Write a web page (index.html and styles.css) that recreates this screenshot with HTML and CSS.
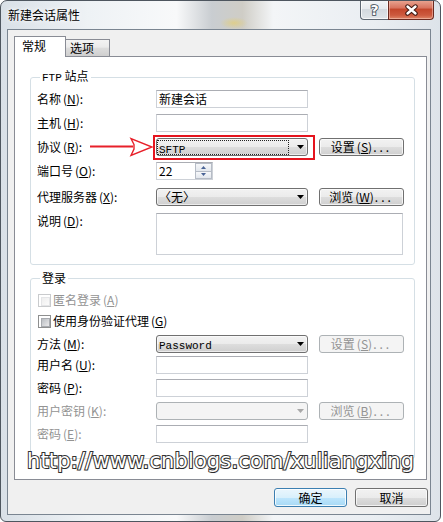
FILE: index.html
```html
<!DOCTYPE html>
<html lang="zh-CN">
<head>
    <meta charset="UTF-8">
    <meta name="viewport" content="width=device-width, initial-scale=1.0">
    <title>新建会话属性</title>

    <link rel="stylesheet" href="styles.css">
</head>
<body>
    <div class="window">
        <div class="titlebar">
            <span class="title">新建会话属性</span>
            <div class="caption">
                <span class="cap help">?</span>
                <span class="cap close">
                    <svg width="15" height="12" viewBox="0 0 15 12">
                        <path d="M3.5 2.5 L11.5 9.5 M11.5 2.5 L3.5 9.5" stroke="#3d1710" stroke-width="4.4" stroke-linecap="round"/>
                        <path d="M3.5 2.5 L11.5 9.5 M11.5 2.5 L3.5 9.5" stroke="#fff" stroke-width="2.4" stroke-linecap="round"/>
                    </svg>
                </span>
            </div>
        </div>

        <div class="client">
            <div class="tabs">
                <span class="tab active">常规</span>
                <span class="tab">选项</span>
            </div>

            <div class="page">
                <fieldset class="group site">
                    <legend><span class="mono">FTP</span> 站点</legend>

                    <div class="row first">
                        <label>名称<span class="k">(<u>N</u>)</span>:</label>
                        <div class="field">新建会话</div>
                    </div>

                    <div class="row">
                        <label>主机<span class="k">(<u>H</u>)</span>:</label>
                        <div class="field"></div>
                    </div>

                    <div class="row">
                        <label>协议<span class="k">(<u>R</u>)</span>:</label>
                        <div class="combo">
                            <span class="val focus"><span class="mono">SFTP</span></span>
                            <svg class="drop" width="7" height="4" viewBox="0 0 7 4"><polygon points="0,0 7,0 3.5,4" fill="#000"/></svg>
                        </div>
                        <button class="btn">设置<span class="k">(<u>S</u>)</span><span class="dots">...</span></button>
                        <svg class="pointer" width="64" height="20" viewBox="0 0 64 20">
                            <line x1="0" y1="9.5" x2="43" y2="9.5" stroke="#e8202a" stroke-width="2"/>
                            <polygon points="44,7.5 41,1.5 62,10 41,18.5 44,12" fill="#fff" stroke="#e8202a" stroke-width="1.4" stroke-linejoin="miter"/>
                        </svg>
                        <span class="redbox"></span>
                    </div>

                    <div class="row port">
                        <label>端口号<span class="k">(<u>O</u>)</span>:</label>
                        <div class="spin">
                            <span class="num">22</span>
                            <span class="arrows">
                                <span><svg width="5" height="3" viewBox="0 0 5 3"><polygon points="0,3 5,3 2.5,0" fill="#4a6496"/></svg></span>
                                <span><svg width="5" height="3" viewBox="0 0 5 3"><polygon points="0,0 5,0 2.5,3" fill="#4a6496"/></svg></span>
                            </span>
                        </div>
                    </div>

                    <div class="row proxy">
                        <label>代理服务器<span class="k">(<u>X</u>)</span>:</label>
                        <div class="combo">
                            <span class="val">〈无〉</span>
                            <svg class="drop" width="7" height="4" viewBox="0 0 7 4"><polygon points="0,0 7,0 3.5,4" fill="#000"/></svg>
                        </div>
                        <button class="btn">浏览<span class="k">(<u>W</u>)</span><span class="dots">...</span></button>
                    </div>

                    <div class="row memo-row">
                        <label>说明<span class="k">(<u>D</u>)</span>:</label>
                        <div class="memo"></div>
                    </div>
                </fieldset>

                <fieldset class="group login">
                    <legend>登录</legend>

                    <div class="check first off">
                        <span class="box"></span>匿名登录<span class="k">(<u>A</u>)</span>
                    </div>

                    <div class="check">
                        <span class="box"></span>使用身份验证代理<span class="k">(<u>G</u>)</span>
                    </div>

                    <div class="row method">
                        <label>方法<span class="k">(<u>M</u>)</span>:</label>
                        <div class="combo">
                            <span class="val"><span class="mono">Password</span></span>
                            <svg class="drop" width="7" height="4" viewBox="0 0 7 4"><polygon points="0,0 7,0 3.5,4" fill="#000"/></svg>
                        </div>
                        <button class="btn off">设置<span class="k">(<u>S</u>)</span><span class="dots">...</span></button>
                    </div>

                    <div class="row user">
                        <label>用户名<span class="k">(<u>U</u>)</span>:</label>
                        <div class="field"></div>
                    </div>

                    <div class="row">
                        <label>密码<span class="k">(<u>P</u>)</span>:</label>
                        <div class="field"></div>
                    </div>

                    <div class="row off">
                        <label>用户密钥<span class="k">(<u>K</u>)</span>:</label>
                        <div class="combo off">
                            <span class="val"></span>
                            <svg class="drop" width="7" height="4" viewBox="0 0 7 4"><polygon points="0,0 7,0 3.5,4" fill="#a8a8a8"/></svg>
                        </div>
                        <button class="btn off">浏览<span class="k">(<u>B</u>)</span><span class="dots">...</span></button>
                    </div>

                    <div class="row off">
                        <label>密码<span class="k">(<u>E</u>)</span>:</label>
                        <div class="field"></div>
                    </div>
                </fieldset>

                <div class="watermark">http://www.cnblogs.com/xuliangxing</div>
            </div>

            <div class="actions">
                <button class="btn default">确定</button>
                <button class="btn">取消</button>
            </div>
        </div>
    </div>
</body>
</html>
```

FILE: styles.css
```css
*{
    margin: 0;
    padding: 0;
    box-sizing: border-box;
}

body{
    background: #fff;
    font-family: "Noto Sans CJK SC", sans-serif;
    font-size: 12px;
    line-height: 16px;
    color: #000;
}

.mono{
    font-family: "Liberation Mono", monospace;
    font-size: 11px;
}

.k{
    margin-left: 2px;
}

.k u{
    text-underline-offset: 1px;
}

/* window frame */

.window{
    width: 441px;
    height: 522px;
    border: 1px solid #4e565f;
    border-radius: 7px 7px 6px 6px;
    padding: 0 9px 0 6px;
    background:
        radial-gradient(ellipse 14px 6px at 233px 22px, rgba(232, 206, 100, .6), transparent),
        linear-gradient(90deg, #d9e0e7 0%, #eef2f5 20%, #f8f9fa 40%, #c9cdd1 48%, #cfcdc6 55%, #f3f5f7 62%, #eaeef2 85%, #dde3e9 100%);
    display: flex;
    flex-direction: column;
    overflow: hidden;
}

.titlebar{
    height: 28px;
    flex-shrink: 0;
    display: flex;
    align-items: center;
}

.title{
    padding-left: 1px;
    text-shadow: 0 0 6px #fff, 0 0 3px #fff;
}

.caption{
    display: flex;
    align-self: flex-start;
    margin: -1px -3px 0 auto;
}

.cap{
    height: 20px;
    border: 1px solid #5d6772;
    border-top: 0;
    display: flex;
    align-items: center;
    justify-content: center;
}

.help{
    width: 28px;
    border-right: 0;
    border-radius: 0 0 0 4px;
    background: linear-gradient(#f4f6f8, #e6eaee 45%, #d3d9df 50%, #e0e5e9);
    box-shadow: inset 0 0 0 1px rgba(255, 255, 255, .7);
    font: bold 14px "DejaVu Sans", sans-serif;
    color: #fff;
    -webkit-text-stroke: 1.6px #3e4954;
    paint-order: stroke fill;
}

.close{
    width: 46px;
    border-color: #6b2a20;
    border-radius: 0 0 4px 0;
    background: linear-gradient(#eaa895, #d97560 40%, #c4472c 50%, #cd5a3f 80%, #df8769);
    box-shadow: inset 0 0 0 1px rgba(255, 220, 210, .45);
}

/* client area */

.client{
    height: 486px;
    flex-shrink: 0;
    border: 1px solid #7a8591;
    background: #f0f0f0;
    padding: 6px 3px 0 6px;
    display: flex;
    flex-direction: column;
}

.tabs{
    height: 20px;
    flex-shrink: 0;
    display: flex;
    align-items: flex-end;
    position: relative;
    z-index: 1;
}

.tab{
    width: 45px;
    height: 17px;
    margin-left: -1px;
    padding-left: 4px;
    border: 1px solid #898c95;
    border-bottom: 0;
    background: linear-gradient(#f3f3f3, #ebebeb 45%, #dddddd 50%, #cfcfcf);
    line-height: 16px;
}

.tab.active{
    width: 52px;
    height: 21px;
    margin: 0 0 -1px 0;
    padding-left: 7px;
    background: #fff;
    line-height: 18px;
    position: relative;
    z-index: 2;
}

.page{
    height: 424px;
    flex-shrink: 0;
    border: 1px solid #898c95;
    background: #fff;
    padding: 0 11px 0 15px;
    position: relative;
}

/* group boxes */

.group{
    border: 1px solid #d5dfe5;
    border-radius: 3px;
    margin-top: 11px;
    padding: 4px 6px 9px 6px;
}

.group legend{
    margin-left: 3px;
    padding: 0 2px;
    line-height: 16px;
}

.login{
    margin-top: 5px;
    padding: 6px 6px 15px 6px;
}

.row{
    display: flex;
    align-items: center;
    height: 18px;
    margin-top: 6px;
    position: relative;
}

.row.first{
    margin-top: 0;
}

.row.proxy{ margin-top: 8px; }
.row.memo-row{ margin-top: 7px; height: 42px; align-items: flex-start; }
.login .row{ margin-top: 5px; }
.login .row.method{ margin-top: 6px; }
.login .row.user{ margin-top: 3px; }

.row label{
    width: 119px;
    flex-shrink: 0;
}

.off,
.off label{
    color: #939393;
}

.field{
    width: 152px;
    height: 18px;
    border: 1px solid #cdd1d7;
    border-top-color: #abadb3;
    background: #fff;
    padding-left: 2px;
    line-height: 16px;
}

.memo{
    width: 247px;
    height: 42px;
    border: 1px solid #cdd1d7;
    border-top-color: #abadb3;
    background: #fff;
}

.combo{
    width: 152px;
    height: 18px;
    border: 1px solid #707070;
    border-radius: 3px;
    background: linear-gradient(#f2f2f2, #ebebeb 50%, #dddddd 51%, #cfcfcf);
    box-shadow: inset 0 0 0 1px rgba(255, 255, 255, .6);
    display: flex;
    align-items: center;
    padding: 0 3px 0 0;
}

.combo .val{
    width: 132px;
    height: 15px;
    padding-left: 2px;
    line-height: 14px;
}

.combo .focus{
    border: 1px dotted #222;
    padding-left: 1px;
}

.combo .drop{
    margin-left: auto;
}

.combo.off{
    border-color: #adb2b5;
    background: #f4f4f4;
    box-shadow: none;
}

.spin{
    width: 57px;
    height: 18px;
    border: 1px solid #cdd1d7;
    border-top-color: #abadb3;
    background: #fff;
    display: flex;
}

.spin .num{
    flex: 1;
    padding-left: 2px;
    line-height: 16px;
}

.spin .arrows{
    width: 17px;
    display: flex;
    flex-direction: column;
}

.spin .arrows span{
    flex: 1;
    display: flex;
    align-items: center;
    justify-content: center;
    border: 1px solid #b6bcc6;
    background: linear-gradient(#f7f8fa, #e3e7ed);
}

.spin .arrows span + span{
    border-top: 0;
}

/* buttons */

.btn{
    width: 85px;
    height: 18px;
    margin-left: 11px;
    border: 1px solid #707070;
    border-radius: 3px;
    background: linear-gradient(#f2f2f2, #ebebeb 50%, #dddddd 51%, #cfcfcf);
    box-shadow: inset 0 0 0 1px rgba(255, 255, 255, .7);
    font: inherit;
    line-height: 16px;
    color: #000;
}

.dots{
    letter-spacing: 3px;
    margin-left: 1px;
}

.btn.off{
    border-color: #adb2b5;
    background: #f4f4f4;
    box-shadow: none;
    color: #939393;
}

/* annotation */

.redbox{
    position: absolute;
    left: 116px;
    top: -3px;
    width: 162px;
    height: 25px;
    border: 2px solid #e5141e;
}

.pointer{
    position: absolute;
    left: 53px;
    top: -1px;
}

/* check boxes */

.check{
    display: flex;
    align-items: center;
    height: 16px;
    margin-top: 5px;
}

.check.first{
    margin-top: 0;
}

.box{
    width: 13px;
    height: 13px;
    margin: 0 2px 0 1px;
    border: 1px solid #8e8f8f;
    background: #fff;
    padding: 2px;
}

.box::after{
    content: "";
    display: block;
    width: 100%;
    height: 100%;
    border: 1px solid #a8abb0;
    background: linear-gradient(135deg, #b9bdc2, #eaeaeb);
}

.off .box{
    border-color: #c9cbcd;
}

.off .box::after{
    border-color: #e4e5e7;
    background: linear-gradient(135deg, #eeeeee, #fbfbfb);
}

.watermark{
    position: absolute;
    left: 12px;
    top: 392px;
    font: 21px/24px "DejaVu Sans", sans-serif;
    letter-spacing: 0.15px;
    color: #fff;
    -webkit-text-stroke: 2px #333;
    paint-order: stroke fill;
    text-shadow: 1px 1px 1px rgba(0, 0, 0, .2);
    white-space: nowrap;
}

/* bottom buttons */

.actions{
    display: flex;
    justify-content: flex-end;
    gap: 8px;
    margin: 8px -1px 0 0;
}

.actions .btn{
    width: 73px;
    height: 19px;
    margin-left: 0;
}

.btn.default{
    border-color: #3c7fb1;
    background: linear-gradient(#eaf6fd, #d9f0fc 50%, #bee6fd 51%, #a7d9f5);
    box-shadow: inset 0 0 0 1px rgba(255, 255, 255, .8);
}
```
